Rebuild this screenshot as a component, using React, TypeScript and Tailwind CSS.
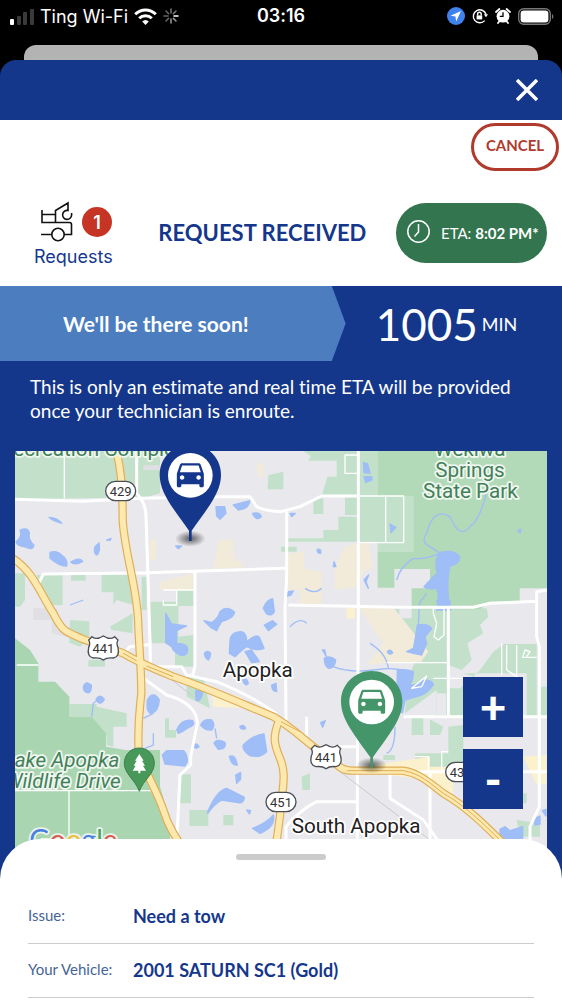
import React, { useState } from 'react';

const CAR_PATH =
  'M18.92 6.01C18.72 5.42 18.16 5 17.5 5h-11c-.66 0-1.21.42-1.42 1.01L3 12v8c0 .55.45 1 1 1h1c.55 0 1-.45 1-1v-1h12v1c0 .55.45 1 1 1h1c.55 0 1-.45 1-1v-8l-2.08-5.99zM6.5 16c-.83 0-1.5-.67-1.5-1.5S5.67 13 6.5 13s1.5.67 1.5 1.5S7.33 16 6.5 16zm11 0c-.83 0-1.5-.67-1.5-1.5s.67-1.5 1.5-1.5 1.5.67 1.5 1.5-.67 1.5-1.5 1.5zM5 11l1.5-4.5h11L19 11H5z';

const details = [
  { label: 'Issue:', value: 'Need a tow' },
  { label: 'Your Vehicle:', value: '2001 SATURN SC1 (Gold)' },
];

function StatusBar() {
  return (
    <div className="grid h-[45px] grid-cols-3 items-start px-2 pt-1 font-[Inter,sans-serif] text-white">
      <div className="flex h-6 items-center gap-[6px] whitespace-nowrap text-[18px]">
        <svg width="26" height="17" viewBox="0 0 26 17" className="shrink-0" aria-hidden="true">
          <rect x="2" y="11" width="4" height="6" rx="1" fill="#fff" />
          <rect x="9" y="8" width="4" height="9" rx="1" fill="#3a3a3a" />
          <rect x="15" y="4" width="4" height="13" rx="1" fill="#3a3a3a" />
          <rect x="22" y="1" width="4" height="16" rx="1" fill="#3a3a3a" />
        </svg>
        <span>Ting Wi-Fi</span>
        <svg width="23" height="17" viewBox="0 0 23 17" fill="none" stroke="#fff" strokeWidth="3" className="shrink-0" aria-hidden="true">
          <path d="M1.2 6.2a14.6 14.6 0 0 1 20.6 0" />
          <path d="M5.2 10.2a9 9 0 0 1 12.6 0" />
          <path d="M11.5 17l-3.3-3.4a4.8 4.8 0 0 1 6.6 0z" fill="#fff" stroke="none" />
        </svg>
        <svg width="16" height="16" viewBox="0 0 16 16" strokeWidth="1.5" strokeLinecap="round" className="shrink-0" aria-hidden="true">
          <path d="M8 1v4M13 3l-2.6 2.6" stroke="#777" />
          <path d="M15 8h-4" stroke="#fff" />
          <path d="M13 13l-2.6-2.6M8 15v-4" stroke="#999" />
          <path d="M3 13l2.6-2.6M1 8h4M3 3l2.6 2.6" stroke="#666" />
        </svg>
      </div>
      <time className="h-6 text-center text-[18px] leading-6 font-semibold">03:16</time>
      <div className="flex h-6 items-center justify-end gap-[7px]">
        <svg width="18" height="18" viewBox="0 0 18 18" aria-hidden="true">
          <circle cx="9" cy="9" r="9" fill="#3f82ee" />
          <path d="M14 4L3.6 8.8l4.8.8.8 4.8z" fill="#fff" />
        </svg>
        <svg width="16" height="16" viewBox="0 0 16 16" fill="none" stroke="#fff" strokeWidth="1.4" aria-hidden="true">
          <path d="M12.7 12.6A6.5 6.5 0 1 1 14 6.2" />
          <path d="M11.8 6.2h4.2l-2 3z" fill="#fff" stroke="none" />
          <rect x="4.6" y="7.4" width="5.6" height="4" fill="#fff" stroke="none" />
          <path d="M5.6 7.6V6a1.8 1.8 0 0 1 3.6 0v1.6" />
        </svg>
        <svg width="16" height="16" viewBox="0 0 16 16" aria-hidden="true">
          <circle cx="8" cy="8.2" r="6.4" fill="#fff" />
          <path d="M1 4L4.4 1M15 4l-3.4-3M3 15l1.6-2M13 15l-1.6-2" stroke="#fff" strokeWidth="1.8" strokeLinecap="round" />
          <path d="M8 4.2v4.2H4.8" stroke="#000" strokeWidth="1.3" fill="none" />
        </svg>
        <svg width="36" height="17" viewBox="0 0 36 17" aria-hidden="true">
          <rect x=".7" y=".7" width="31.6" height="15.6" rx="5" fill="none" stroke="#777" strokeWidth="1.4" />
          <rect x="2.6" y="2.6" width="27.8" height="11.8" rx="3.2" fill="#fff" />
          <path d="M34 6c1.8.8 1.8 4.2 0 5z" fill="#777" />
        </svg>
      </div>
    </div>
  );
}

function TruckIcon() {
  return (
    <svg width="32" height="42" viewBox="0 0 32 42" fill="none" stroke="#111" strokeWidth="1.6" aria-hidden="true">
      <path d="M1 9v12.500h27.500a2 2 0 0 1 2 2V33.500h-7.500M1 13.500h13.500M14.500 21.500V9.500L27 2v7.500a4.500 4.500 0 1 0 3.600 4.500V12M0 33.500h11" />
      <circle cx="17" cy="33.500" r="6.200" />
    </svg>
  );
}

interface PinProps {
  x: number;
  y: number;
  color: string;
}

function CarPin({ x, y, color }: PinProps) {
  return (
    <g transform={`translate(${x} ${y})`}>
      <ellipse cx="0" cy="190" rx="46" ry="24" fill="url(#pin-shadow)" />
      <path d="M0-93C52-93 92-52 92-2C92 52 52 98 4 166V197H-4V166C-52 98-92 52-92-2C-92-52-52-93 0-93z" fill={color} />
      <circle r="67" fill="#fff" />
      <path d={CAR_PATH} transform="translate(-54 -59) scale(4.5)" fill={color} />
    </g>
  );
}

function RouteShield({ x, y, label }: { x: number; y: number; label: string }) {
  return (
    <g transform={`translate(${x} ${y})`}>
      <rect x="-45" y="-29" width="90" height="58" rx="29" fill="#fff" stroke="#4b4f55" strokeWidth="4" />
      <text y="14" textAnchor="middle" fontSize="39" fill="#333">{label}</text>
    </g>
  );
}

function UsShield({ x, y, label }: { x: number; y: number; label: string }) {
  return (
    <g transform={`translate(${x} ${y})`}>
      <path
        d="M-34-36Q-24-28-12-32L0-38L12-32Q24-28 34-36L44-26Q38-16 44-4Q50 24 30 28Q10 26 0 34Q-10 26-30 28Q-50 24-44-4Q-38-16-44-26z"
        fill="#fff"
        stroke="#4b4f55"
        strokeWidth="4"
      />
      <text y="13" textAnchor="middle" fontSize="39" fill="#333">{label}</text>
    </g>
  );
}

// Map units are three to a pixel
function ServiceMap() {
  const highways = [
    'M30 590C100 630 120 700 160 760C190 820 200 815 250 838L370 880C430 915 470 930 520 950C610 980 700 1020 820 1070C890 1110 930 1160 990 1195C1020 1225 1030 1232 1060 1232H1210C1260 1240 1290 1270 1330 1300C1400 1340 1450 1390 1560 1500',
    'M345 255C362 320 368 370 368 480C375 590 415 690 415 800C420 900 424 940 424 1000C418 1060 412 1090 416 1170C430 1230 470 1290 490 1350C500 1385 515 1420 560 1480',
    'M836 1085C818 1130 822 1150 838 1190C856 1230 852 1260 846 1310C840 1370 838 1400 820 1500',
  ];

  return (
    <svg
      className="absolute inset-0 h-full w-full font-[Roboto,sans-serif]"
      viewBox="45 273 1596 1260"
      preserveAspectRatio="xMidYMin slice"
      role="img"
      aria-label="Map of Apopka"
    >
      <defs>
        <radialGradient id="pin-shadow">
          <stop offset="0" stopColor="#000" stopOpacity=".6" />
          <stop offset="1" stopColor="#000" stopOpacity="0" />
        </radialGradient>
      </defs>
      <rect x="45" y="273" width="1596" height="1260" fill="#e8e8ed" />

      {/* parks */}
      <g fill="#c3e1ca">
        <path d="M45 273H480V400L440 412L45 418zM805 345L850 335V388H803zM910 273H1133V408H1240V575H1133V545H865V535H970V510H1015V470H1075V408H965L982 350H1010V302H925L932 288zM940 415H970V462H940zM1035 412H1080V465H1035zM843 560H890V575H843z" />
        <path d="M45 640H75V720L60 740H45zM110 645H188V735H140zM213 645H257V662H213zM305 645H385L400 735L350 720L340 735V697H305zM210 780L268 784V830L240 860L208 848zM330 800L398 760V820L335 810zM450 725H530V690H580V738H535V830L580 825V920H525V850H455zM425 650H440V750H425zM208 975V1070H275L320 1130V1155L340 1160V1100H380V1060L290 1040V1032H208zM265 900H315V920H265zM495 1075H507V1110H528V1133H495zM545 1243H573V1330H540zM568 1350H625V1398H568zM670 1365H700V1396H670zM560 945L610 950L630 1045L560 1010z" />
        <path d="M1182 745H1460L1465 770L1440 795L1450 820L1402 850L1415 900L1385 930L1345 915V1070H1310V990L1215 1060L1220 970L1250 890L1285 875z" />
        <path d="M1512 852H1610V1070H1580V940H1389L1440 955L1400 1000V1070H1345V985H1380L1440 930L1480 875zM1620 980H1641V1070H1620z" />
        <path d="M1235 1070H1270V1125H1235zM1290 1078L1330 1100L1320 1125H1290zM1345 1100L1390 1095V1220H1345zM1150 1185H1185V1200H1150zM1245 1180H1345V1240H1245zM905 1250L930 1240V1290H907zM1400 1300H1580V1330H1440zM1550 1380L1620 1390V1430H1560z" />
      </g>
      <path d="M1133 273H1641V685H1559V725H1470L1440 748H1235V685H1290V627H1183V683H1133V575H1240V408H1133z" fill="#b2d9b8" />
      <path d="M45 835L90 870L115 910V965H165L208 1010V1070H275L318 1120V1160L375 1170H480V1280L510 1380V1533H45z" fill="#a9d5b1" />
      <path d="M1198 745H1235V775H1198zM1310 1000H1338V1065H1310z" fill="#e8e8ed" />

      {/* built-up areas */}
      <g fill="#f2ebda">
        <path d="M450 540L468 538V600H448zM655 540H700V590L735 620L640 628zM480 665L580 640V690H480zM770 310H790V350H775zM865 580L912 575V625L965 635V735H900V690H865zM1005 620L1035 560L1090 545L1105 550L1120 625L1090 635L1070 680L1005 690zM1078 745H1182L1285 875L1260 910L1190 905L1100 915L1150 850z" />
        <path d="M635 990L720 1010L740 1045L640 1040zM1120 1215L1290 1190V1260L1160 1245zM1255 1220H1360V1300L1320 1290zM1040 745H1065V775H1040zM1570 1190L1640 1185V1270L1610 1275z" fill="#fcf1cd" />
      </g>
      <path d="M430 316H480V330H430zM100 745H170L200 830L155 820V780H100z" fill="#dfdfe4" />

      {/* lakes and creeks */}
      <g fill="#9fbdf6" stroke="#9fbdf6" strokeWidth="4" strokeLinejoin="round">
        <path d="M60 510Q85 500 88 520Q84 540 102 555Q100 572 80 562Q50 558 48 545Q68 530 60 510zM147 472Q170 472 186 490Q160 484 147 472zM150 577Q170 570 185 585Q205 600 200 618Q180 620 150 595zM212 606Q240 590 248 604Q225 618 212 606zM285 560L297 549Q302 575 290 585Q280 580 285 560zM648 440L674 440L678 460L660 478L650 468zM700 435L750 422Q745 448 715 450zM757 460Q780 455 784 470Q768 485 757 460zM527 558H545L535 566zM320 540L333 535L330 541z" />
        <path d="M497 760L515 792L560 798L530 812L530 850Q565 850 563 872Q560 890 540 885Q520 875 515 860L497 848zM612 782L635 788Q655 775 660 755Q680 735 704 757Q700 775 665 785Q655 800 650 812L632 802zM690 845Q690 815 725 815Q740 820 740 845Q770 820 778 832L792 865Q770 875 740 860Q725 870 705 890L688 880zM790 745Q800 718 818 716L823 755Q815 770 800 762zM793 795L818 782L830 793L805 812zM735 875L755 870L765 885L778 905L755 908zM613 880Q622 868 632 880Q630 895 625 900Q615 895 613 880zM587 992Q605 985 608 1000Q600 1030 588 1020zM442 1020Q460 990 478 1020Q475 1055 455 1060Q438 1060 442 1020zM250 980Q258 960 274 976Q275 1000 262 998Q250 995 250 980zM290 1015Q300 1000 313 1018Q300 1040 288 1020zM530 1110Q545 1075 578 1082Q588 1095 565 1103Q548 1115 535 1120zM602 1095Q610 1075 635 1080Q648 1095 635 1110Q615 1112 602 1095zM642 1150Q650 1135 675 1147Q680 1168 655 1168zM577 1158Q588 1145 597 1160Q590 1170 577 1158zM730 1155Q760 1125 792 1122L800 1175Q780 1195 750 1187Q725 1170 730 1155zM487 1185L500 1172H550Q562 1180 562 1205L555 1218L495 1212zM688 1190Q705 1180 712 1215Q695 1218 688 1190zM707 1245L722 1237V1258L710 1270zM622 1358Q650 1290 680 1285L733 1312Q732 1330 715 1328L665 1320Q640 1335 624 1360zM758 1405Q800 1390 820 1365Q828 1400 780 1420zM728 960Q740 950 745 970Q735 982 728 960zM719 1100Q730 1090 737 1105Q725 1112 719 1100zM740 1350L752 1352L748 1362z" />
        <path d="M1090 308L1103 312L1110 340L1092 338zM1092 350H1115L1116 360L1097 368zM1170 492L1188 502L1173 518zM1322 577Q1365 568 1378 590Q1382 610 1350 618Q1335 680 1352 750H1310Q1320 700 1308 685Q1280 690 1272 680Q1300 650 1312 640Q1300 600 1322 577zM870 460H886L875 470zM952 568Q965 565 962 580Q950 580 952 568zM1002 605L1008 620H1000zM865 695L880 693L873 705L858 710zM1092 660L1106 645L1098 665L1105 685zM1553 512L1563 508L1560 519z" />
        <path d="M1252 795Q1280 788 1296 805L1275 830L1280 850L1265 885L1240 880L1220 875L1240 865L1245 840zM973 895Q990 885 1007 900Q1005 925 985 925Q972 915 973 895zM967 870L974 870L978 888zM1192 932Q1215 925 1240 935Q1240 970 1225 975Q1260 975 1270 960Q1300 960 1300 975Q1280 1005 1250 1010L1215 1020L1208 1058H1190zM1162 875Q1170 865 1178 878Q1168 888 1162 875zM962 1088L976 1082L968 1102zM1310 722H1350V735H1318zM1500 1408L1515 1400L1530 1412L1568 1400V1440L1500 1440zM1602 1375L1620 1368L1620 1392L1605 1395zM1627 1352L1638 1348V1368zM815 975L828 970L830 995Q815 995 815 975z" />
      </g>
      <g fill="none" stroke="#9fbdf6" strokeWidth="4">
        <path d="M1460 395Q1440 480 1410 500Q1380 540 1350 470Q1300 440 1280 520Q1260 545 1290 560L1320 580Q1270 600 1240 595Q1200 620 1190 660M915 685Q945 705 965 685M870 800Q900 770 920 790M1000 920Q1050 940 1120 930L1165 925Q1160 880 1110 850M1165 925L1210 930M250 720L210 735M430 1075L460 1060M435 1165L460 1155V1120M645 1105L650 1135M1255 800L1258 730L1280 700M1185 1100Q1185 1170 1160 1180" />
        <path d="M275 1070L280 1030L300 1015" />
      </g>

      {/* local roads */}
      <g fill="none" stroke="#fff" strokeWidth="9" strokeLinejoin="round">
        <path d="M45 418L250 424L420 415L660 410H750L770 440Q800 455 843 455L900 440L965 408H1075M410 273V400Q438 430 438 470L444 650L452 920H545L560 945L650 965Q760 1010 830 1062M115 672L130 642L440 638L843 625H860M585 632V920L578 945M1075 273V740M860 455V655L855 740L858 1080M865 735L1200 742H1420L1470 730L1610 724V695L1641 690M1610 724V830L1618 860V1340L1590 1400V1480M1075 740L1072 1230V1480M1345 745V1070M1210 1070H1641M840 1070V1090M1170 1235V1315L1270 1380L1320 1450M1290 1235V1500M1210 1235H1641M424 950L500 1005Q590 1030 592 1090Q580 1150 572 1190V1215L540 1245L530 1450M370 880L390 860L455 853M858 1480V1400Q900 1350 950 1325H1072M920 1070V1150M1000 1160H1072" />
        <path
          d="M193 273V415M490 690H580M490 720V735H530V690M1080 408H1211V548H1075M1157 408V545M1035 285H1075V340H1035zM207 1290V1480M45 1292H480M50 915H115M1300 745H1332V825L1315 840L1302 830L1310 790L1300 760zM1345 850H1340M1505 945V850M1520 855V930M1550 855V950L1520 930M1610 892H1568L1575 870L1590 875L1580 890M1235 985L1280 948L1265 980zM1245 1190H1285V1240M1325 1240V1175H1345M1160 908H1345M1300 955H1440"
          strokeWidth="4"
        />
      </g>

      <g fill="none">
        <path d="M465 920L580 1010M1020 1235L1290 1440" stroke="#c9cbce" strokeWidth="3" />
        {highways.map((d) => <path key={d} d={d} stroke="#dfae58" strokeWidth="25" />)}
        {highways.map((d) => <path key={d} d={d} stroke="#fde8ae" strokeWidth="18" />)}
        <path d="M370 880L410 902M440 918L520 950M1040 1232H1210C1260 1240 1290 1270 1330 1300C1400 1340 1450 1390 1560 1500M843 1085L900 1115" stroke="#dfae58" strokeWidth="3" />
      </g>

      <RouteShield x={362} y={393} label="429" />
      <RouteShield x={843} y={1326} label="451" />
      <RouteShield x={1382} y={1236} label="436" />
      <UsShield x={310} y={866} label="441" />
      <UsShield x={978} y={1192} label="441" />

      <g strokeWidth="11" strokeLinejoin="round" paintOrder="stroke" stroke="#eff7ef" fill="#43805a">
        <g fontSize="62" textAnchor="middle">
          <text x="1410" y="289">Wekiwa</text>
          <text x="1410" y="351">Springs</text>
          <text x="1411" y="414">State Park</text>
        </g>
        <text x="556" y="288" fontSize="62" textAnchor="end">Recreation Complex</text>
        <g fontSize="62" fontStyle="italic" textAnchor="end">
          <text x="358" y="1222">Lake Apopka</text>
          <text x="362" y="1285">Wildlife Drive</text>
        </g>
        <g stroke="#fff" fill="#1f2023" fontSize="62">
          <text x="668" y="951">Apopka</text>
          <text x="875" y="1419">South Apopka</text>
        </g>
        <text x="88" y="1470" fontSize="84" className="font-[Lato,sans-serif]" stroke="#e9f3ec">
          <tspan fill="#4a7fe0">G</tspan>
          <tspan fill="#d95b50">o</tspan>
          <tspan fill="#eabf3c">o</tspan>
          <tspan fill="#4a7fe0">g</tspan>
          <tspan fill="#4ba35f">l</tspan>
          <tspan fill="#d95b50">e</tspan>
        </text>
      </g>

      <g transform="translate(418 1212)">
        <path d="M0-48C26-48 45-28 45-2C45 30 12 48 0 82C-12 48-45 30-45-2C-45-28-26-48 0-48z" fill="#48985a" stroke="#3b7f4a" strokeWidth="3" />
        <path d="M0-30L13-10H8L17 5H11L20 20H3V28H-3V20H-20L-11 5H-17L-8-10H-13z" fill="#fff" />
      </g>

      <CarPin x={571} y={346} color="#14378c" />
      <CarPin x={1115} y={1026} color="#44966a" />
    </svg>
  );
}

export default function App() {
  const [count] = useState(1);

  return (
    <div className="flex min-h-screen flex-col overflow-hidden bg-black font-[Lato,sans-serif] text-[#14378c] [font-variant-ligatures:none]">
      <StatusBar />
      <div className="mx-6 h-[15px] rounded-t-xl bg-[#b3b3b3]" />

      <main className="flex flex-1 flex-col rounded-t-2xl bg-[#14378c]">
        <header className="flex h-[60px] items-center justify-end px-6">
          <button type="button" aria-label="Close" className="text-white">
            <svg width="22" height="22" viewBox="0 0 22 22" stroke="currentColor" strokeWidth="3.5" aria-hidden="true">
              <path d="M1 1l20 20M21 1L1 21" />
            </svg>
          </button>
        </header>

        <section className="bg-white pb-[17px]">
          <div className="flex justify-end px-[3px] pt-[3px]">
            <button type="button" className="h-12 w-[88px] rounded-full border-3 border-[#b03a2c] pb-[3px] text-[15px] font-bold text-[#b03a2c]">
              CANCEL
            </button>
          </div>
          <div className="flex items-center justify-between pt-[26px] pr-[15px] pl-[34px]">
            <div className="flex h-[72px] flex-col gap-[2px] pt-1">
              <div className="flex items-center gap-[9px] pl-[7px]">
                <TruckIcon />
                <span className="flex size-[30px] items-center justify-center rounded-full bg-[#c53425] font-[Inter,sans-serif] text-[18px] font-semibold text-white">
                  {count}
                </span>
              </div>
              <a href="#requests" className="font-[Inter,sans-serif] text-[18px] leading-6">Requests</a>
            </div>
            <h1 className="pl-4 text-[22px] leading-7 font-bold whitespace-nowrap">REQUEST RECEIVED</h1>
            <div className="flex h-[60px] w-[151px] items-center gap-[11px] rounded-full bg-[#33754f] pl-[11px] text-[15px] whitespace-nowrap text-white">
              <svg width="23" height="23" viewBox="0 0 23 23" fill="none" stroke="currentColor" strokeWidth="1.5" className="mb-1 shrink-0" aria-hidden="true">
                <circle cx="11.5" cy="11.5" r="10.7" />
                <path d="M11.5 4v8l-4 4.5" />
              </svg>
              <p>ETA: <b>8:02 PM*</b></p>
            </div>
          </div>
        </section>

        <section className="flex h-[75px] text-white">
          <div className="flex w-[61.5%] items-center bg-[#4b7dbf] pl-[63px] text-[21px] font-bold [clip-path:polygon(0_0,96%_0,100%_50%,96%_100%,0_100%)]">
            We'll be there soon!
          </div>
          <p className="flex flex-1 items-center gap-1 pl-[30px]">
            <span className="text-[44px] leading-none">1005</span>
            <span className="text-[18px] leading-none">MIN</span>
          </p>
        </section>

        <p className="px-[30px] pt-[14px] pb-7 text-[19px] leading-6 text-white">
          This is only an estimate and real time ETA will be provided once your technician is enroute.
        </p>

        <section className="relative mx-[15px] h-[420px] overflow-hidden">
          <ServiceMap />
          <div className="absolute top-[226px] right-6 flex flex-col gap-3 text-[46px] leading-none font-black text-white">
            <button type="button" aria-label="Zoom in" className="size-[60px] bg-[#14378c]">+</button>
            <button type="button" aria-label="Zoom out" className="size-[60px] bg-[#14378c]">-</button>
          </div>
        </section>

        <section className="relative -mt-8 flex-1 rounded-t-[40px] bg-white px-7 pt-[15px]">
          <div className="mx-auto h-[6px] w-[90px] rounded-full bg-[#ccc]" />
          <dl className="pt-[30px]">
            {details.map(({ label, value }) => (
              <div key={label} className="flex h-[54px] items-center border-b border-[#ccc]">
                <dt className="w-[105px] pb-[3px] text-[15px] text-[#456596]">{label}</dt>
                <dd className="text-[18px] font-bold">{value}</dd>
              </div>
            ))}
          </dl>
        </section>
      </main>
    </div>
  );
}
